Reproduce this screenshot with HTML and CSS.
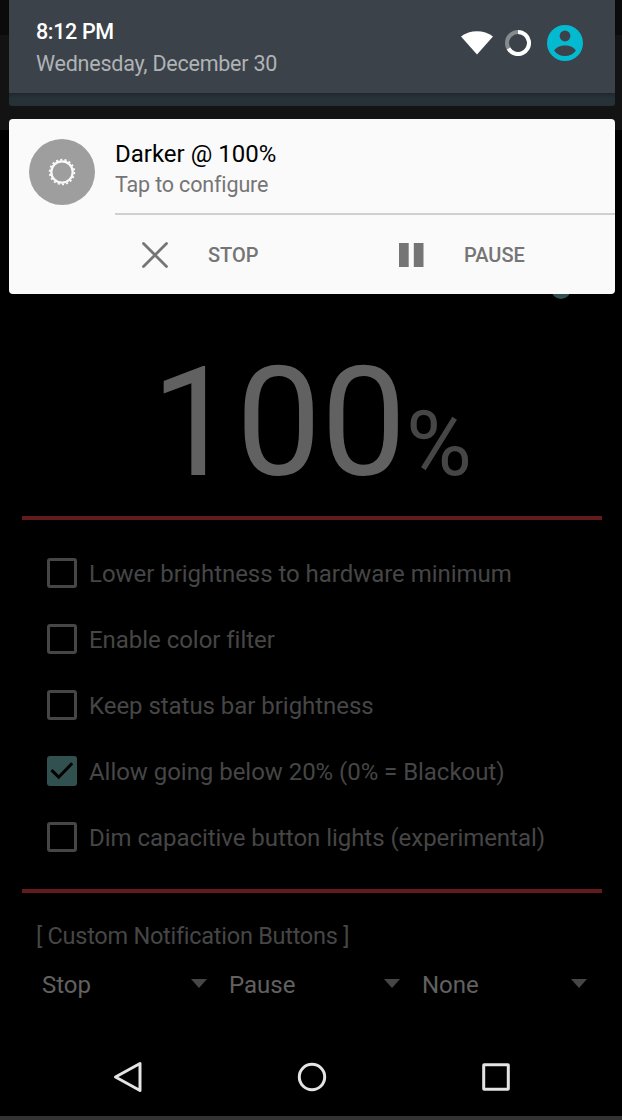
FILE: index.html
```html
<!DOCTYPE html>
<html lang="en">
<head>
  <meta charset="UTF-8">
  <meta name="viewport" content="width=device-width, initial-scale=1.0">
  <title>Darker</title>
  <link rel="stylesheet" href="styles.css">
</head>
<body>
  <div class="screen">
    <!-- Notification shade -->
    <div class="shade">
      <header class="shade-header">
        <div class="clock">
          <div class="time">8:12 PM</div>
          <div class="date">Wednesday, December 30</div>
        </div>
        <div class="status-icons">
          <svg class="wifi" width="32" height="24" viewBox="0 0 32 24">
            <path d="M0 5.6C9 -1.5 23 -1.5 32 5.6L16 23.5Z" fill="#fff"/>
          </svg>
          <svg class="battery" width="26" height="26" viewBox="0 0 26 26">
            <circle cx="13" cy="13" r="11" fill="none" stroke="#868b90" stroke-width="4"/>
            <path d="M13 2A11 11 0 1 1 3.5 18.5" fill="none" stroke="#fff" stroke-width="4"/>
          </svg>
          <svg class="user" width="36" height="36" viewBox="0 0 36 36">
            <circle cx="18" cy="18" r="18" fill="#04bad1"/>
            <circle cx="18" cy="11" r="5.4" fill="#3b4249"/>
            <path d="M7.2 25.8C10.5 18.8 25.5 18.8 28.8 25.8C23.8 32.8 12.2 32.8 7.2 25.8Z" fill="#3b4249"/>
          </svg>
        </div>
      </header>
      <div class="shade-strip"></div>

      <section class="notification">
        <div class="notification-main">
          <div class="notification-icon">
            <svg width="28" height="28" viewBox="0 0 28 28">
              <circle cx="14" cy="14" r="10.7" fill="none" stroke="#fafafa" stroke-width="2.2"/>
              <circle cx="14" cy="14" r="12.3" fill="none" stroke="#fafafa" stroke-width="1.8" stroke-dasharray="2.1 2.194"/>
            </svg>
          </div>
          <div class="notification-text">
            <div class="notification-title">Darker @ 100%</div>
            <div class="notification-sub">Tap to configure</div>
          </div>
        </div>
        <div class="notification-actions">
          <button class="action">
            <svg width="28" height="28" viewBox="0 0 28 28">
              <path d="M2.5 2.5L25.5 25.5M25.5 2.5L2.5 25.5" stroke="#757575" stroke-width="2.8" stroke-linecap="round"/>
            </svg>
            <span>STOP</span>
          </button>
          <button class="action">
            <svg width="28" height="28" viewBox="0 0 28 28">
              <path d="M2 2h9.7v24H2zM16.8 2h9.7v24h-9.7z" fill="#757575"/>
            </svg>
            <span>PAUSE</span>
          </button>
        </div>
      </section>
    </div>

    <!-- App content -->
    <main class="app">
      <div class="slider"><span class="slider-knob"></span></div>
      <div class="value">100<span class="percent">%</span></div>

      <div class="line"></div>
      <div class="options">
        <div class="option"><span class="check"></span><span class="label">Lower brightness to hardware minimum</span></div>
        <div class="option"><span class="check"></span><span class="label">Enable color filter</span></div>
        <div class="option"><span class="check"></span><span class="label">Keep status bar brightness</span></div>
        <div class="option">
          <span class="check checked">
            <svg width="30" height="30" viewBox="0 0 30 30">
              <path d="M4.5 14.2L11.7 21.2L25.2 7.2" fill="none" stroke="#000" stroke-width="3"/>
            </svg>
          </span>
          <span class="label">Allow going below 20% (0% = Blackout)</span>
        </div>
        <div class="option"><span class="check"></span><span class="label">Dim capacitive button lights (experimental)</span></div>
      </div>
      <div class="line"></div>

      <div class="custom-title">[ Custom Notification Buttons ]</div>
      <div class="selects">
        <div class="select">Stop<i class="arrow"></i></div>
        <div class="select">Pause<i class="arrow"></i></div>
        <div class="select">None<i class="arrow"></i></div>
      </div>
    </main>

    <!-- Navigation bar -->
    <nav class="navbar">
      <svg width="32" height="32" viewBox="0 0 32 32">
        <path d="M3.5 16L28 2.5V29.5Z"/>
      </svg>
      <svg width="32" height="32" viewBox="0 0 32 32">
        <circle cx="16" cy="16" r="12.7"/>
      </svg>
      <svg width="32" height="32" viewBox="0 0 32 32">
        <rect x="3.7" y="3.7" width="24.6" height="24.6" rx="0.5"/>
      </svg>
    </nav>
  </div>
</body>
</html>
```

FILE: styles.css
```css
:root {
  --header: #3b4249;
  --strip: #263238;
  --card: #fafafa;
  --grey: #757575;
  --red: #631c1e;
  --teal: #315150;
  --label: #464646;
}

* {
  box-sizing: border-box;
}

body {
  margin: 0;
  background: #000;
  font-family: Roboto, sans-serif;
}

svg {
  display: block;
}

.screen {
  display: flex;
  flex-direction: column;
  width: 622px;
  height: 1120px;
  overflow: hidden;
  border-bottom: 4px solid #333;
  background: linear-gradient(#0b0b0b 35px, #131313 35px, #131313 130px, #000 130px);
}

/* Shade */
.shade {
  position: relative;
  z-index: 1;
  margin: 0 7px 0 9px;
}

.shade-header {
  display: flex;
  justify-content: space-between;
  height: 93px;
  padding: 16px 32px 0 27px;
  background: var(--header);
}

.time,
.date {
  font-size: 21.5px;
  line-height: 32px;
  letter-spacing: -0.23px;
}

.time {
  color: #fff;
  font-weight: 500;
  letter-spacing: -0.35px;
}

.date {
  color: #b0b3b6;
}

.status-icons {
  display: flex;
  align-items: center;
  height: 54px;
}

.battery {
  margin: 0 16px 0 12px;
}

.shade-strip {
  height: 13px;
  border-radius: 0 0 3px 3px;
  background: linear-gradient(#20272d, var(--strip) 5px);
}

.notification {
  height: 175px;
  margin-top: 13px;
  border-radius: 4px;
  background: var(--card);
}

.notification-main {
  display: flex;
  height: 94px;
  padding: 20px 0 0 20px;
}

.notification-icon {
  display: flex;
  align-items: center;
  justify-content: center;
  width: 66px;
  height: 66px;
  margin-right: 20px;
  border-radius: 50%;
  background: #9e9e9e;
}

.notification-title {
  font-size: 24px;
  line-height: 30px;
  color: #000;
}

.notification-sub {
  font-size: 21.5px;
  line-height: 32px;
  letter-spacing: -0.15px;
  color: var(--grey);
}

.notification-actions {
  display: flex;
  height: 81px;
  margin-left: 106px;
  border-top: 2px solid #d0d0d0;
}

.action {
  display: flex;
  flex: none;
  align-items: center;
  gap: 39px;
  width: 256px;
  padding: 0 0 0 26px;
  border: none;
  background: none;
  font-family: inherit;
  font-size: 20px;
  font-weight: 500;
  color: var(--grey);
}

/* clips the second action at the card edge */
.action:last-child {
  width: 243px;
}

/* App */
.app {
  flex: 1;
}

.slider {
  position: relative;
  height: 52px;
}

.slider-knob {
  position: absolute;
  top: -15px;
  left: 551px;
  width: 20px;
  height: 20px;
  border-radius: 50%;
  background: var(--teal);
}

.value {
  height: 170px;
  padding-left: 151px;
  font-size: 152px;
  line-height: 154px;
  letter-spacing: -0.4px;
  color: #616161;
}

.percent {
  font-size: 90px;
  line-height: 1;
  color: #464646;
}

.line {
  height: 4px;
  margin: 0 20px 0 22px;
  background: var(--red);
}

.options {
  height: 369px;
  padding: 20px 0 0 47px;
}

.option {
  display: flex;
  align-items: center;
  height: 66px;
  font-size: 24px;
  color: var(--label);
}

.check {
  width: 30px;
  height: 30px;
  margin-right: 12px;
  border: 3px solid #464646;
  border-radius: 3px;
}

.checked {
  border: none;
  background: var(--teal);
}

.label {
  padding-top: 2px;
  letter-spacing: -0.04px;
}

.custom-title {
  margin: 27px 0 0 36px;
  font-size: 23.5px;
  line-height: 32px;
  letter-spacing: -0.26px;
  color: var(--label);
}

.selects {
  display: grid;
  grid-template-columns: 187px 193px 187px;
  margin: 17px 0 0 42px;
}

.select {
  display: flex;
  align-items: center;
  justify-content: space-between;
  padding-right: 22px;
  font-size: 24px;
  line-height: 32px;
  color: #616161;
}

.arrow {
  margin-top: -4px;
  border: 8px solid transparent;
  border-top: 9px solid #464646;
  border-bottom: 0;
}

/* Navigation bar */
.navbar {
  display: flex;
  justify-content: space-between;
  align-items: center;
  height: 78px;
  padding: 0 110px 0 112px;
}

.navbar svg {
  fill: none;
  stroke: #e4e4e4;
  stroke-width: 3;
  stroke-linejoin: round;
}
```
